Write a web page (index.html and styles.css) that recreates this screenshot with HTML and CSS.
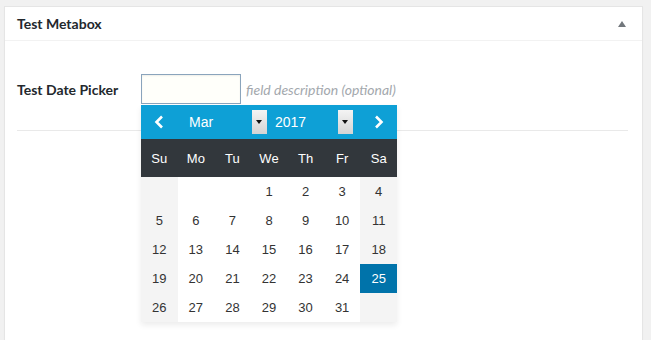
FILE: index.html
```html
<!DOCTYPE html>
<html lang="en">
<head>
  <meta charset="UTF-8">
  <title>Test Metabox</title>
  <link rel="stylesheet" href="styles.css">
</head>
<body>
  <div class="postbox">
    <div class="postbox-header">
      <h2>Test Metabox</h2>
      <span class="toggle-indicator"></span>
    </div>
    <div class="inside">
      <div class="field-row">
        <label class="field-label" for="test_date">Test Date Picker</label>
        <div class="field-body">
          <div class="picker-wrap">
            <input id="test_date" class="date-input" type="text">
            <div class="datepicker">
              <div class="dp-header">
                <span class="dp-nav">
                  <svg width="10" height="14" viewBox="0 0 10 14"><path d="M8 1.5 2.5 7 8 12.5" fill="none" stroke="#fff" stroke-width="2.6"/></svg>
                </span>
                <span class="dp-select month"><span class="dp-value">Mar</span><span class="dp-drop"></span></span>
                <span class="dp-select year"><span class="dp-value">2017</span><span class="dp-drop"></span></span>
                <span class="dp-nav next">
                  <svg width="10" height="14" viewBox="0 0 10 14"><path d="M2 1.5 7.5 7 2 12.5" fill="none" stroke="#fff" stroke-width="2.6"/></svg>
                </span>
              </div>
              <div class="dp-weekdays">
                <span>Su</span><span>Mo</span><span>Tu</span><span>We</span><span>Th</span><span>Fr</span><span>Sa</span>
              </div>
              <div class="dp-days">
                <span class="weekend"></span><span></span><span></span><span>1</span><span>2</span><span>3</span><span class="weekend">4</span>
                <span class="weekend">5</span><span>6</span><span>7</span><span>8</span><span>9</span><span>10</span><span class="weekend">11</span>
                <span class="weekend">12</span><span>13</span><span>14</span><span>15</span><span>16</span><span>17</span><span class="weekend">18</span>
                <span class="weekend">19</span><span>20</span><span>21</span><span>22</span><span>23</span><span>24</span><span class="weekend active">25</span>
                <span class="weekend">26</span><span>27</span><span>28</span><span>29</span><span>30</span><span>31</span><span class="weekend"></span>
              </div>
            </div>
          </div>
          <span class="description">field description (optional)</span>
        </div>
      </div>
    </div>
  </div>
</body>
</html>
```

FILE: styles.css
```css
body {
  margin: 0;
  background: #f1f1f1;
  font-family: Lato, "Liberation Sans", sans-serif;
  color: #23282d;
  overflow: hidden;
  height: 340px;
}
.postbox {
  margin: 6px 0 0 4px;
  width: 637px;
  min-height: 400px;
  background: #fff;
  border: 1px solid #e5e5e5;
  box-shadow: 0 1px 1px rgba(0, 0, 0, 0.04);
}
.postbox-header {
  display: flex;
  align-items: center;
  justify-content: space-between;
  height: 33px;
  padding: 0 12px;
  border-bottom: 1px solid #f2f2f2;
}
.postbox-header h2 {
  margin: 0;
  font-size: 14px;
  font-weight: 700;
  color: #23282d;
}
.toggle-indicator {
  width: 0;
  height: 0;
  margin-right: 4px;
  border-left: 4px solid transparent;
  border-right: 4px solid transparent;
  border-bottom: 6px solid #72777c;
}
.inside {
  padding: 33px 14px 0 12px;
}
.field-row {
  display: flex;
  align-items: center;
  padding-bottom: 26px;
  border-bottom: 1px solid #e9e9e9;
}
.field-label {
  width: 124px;
  font-size: 14px;
  font-weight: 700;
  color: #23282d;
}
.field-body {
  display: flex;
  align-items: center;
}
.picker-wrap {
  position: relative;
}
.date-input {
  display: block;
  box-sizing: border-box;
  width: 100px;
  height: 30px;
  margin: 0;
  border: 1px solid #8aa4bc;
  background: #fffffa;
  box-shadow: inset 0 1px 2px rgba(0, 0, 0, 0.07);
}
.description {
  margin-left: 5px;
  font-size: 14px;
  font-style: italic;
  color: #a3a8ad;
}
.datepicker {
  position: absolute;
  left: 0;
  top: 31px;
  width: 256px;
  font-family: "Liberation Sans", Arial, sans-serif;
  background: #fff;
  box-shadow: 0 3px 6px rgba(0, 0, 0, 0.08);
  z-index: 2;
}
.dp-header {
  display: flex;
  align-items: center;
  height: 34px;
  background: #0ea0d6;
  color: #fff;
}
.dp-nav {
  display: flex;
  justify-content: center;
  width: 36px;
}
.dp-nav.next {
  margin-left: 8px;
}
.dp-select {
  display: flex;
  align-items: center;
  justify-content: space-between;
  height: 24px;
  font-size: 14px;
}
.dp-select.month {
  width: 78px;
  padding-left: 12px;
}
.dp-select.year {
  width: 78px;
  margin-left: 8px;
}
.dp-drop {
  position: relative;
  width: 15px;
  height: 24px;
  background: linear-gradient(#f4f4f4, #d4d4d4);
}
.dp-drop::after {
  content: "";
  position: absolute;
  left: 4px;
  top: 10px;
  border-left: 3px solid transparent;
  border-right: 3px solid transparent;
  border-top: 4px solid #111;
}
.dp-weekdays {
  display: grid;
  grid-template-columns: repeat(7, 1fr);
  height: 38px;
  background: #32373c;
  color: #fff;
  font-size: 13px;
}
.dp-weekdays span {
  display: flex;
  align-items: center;
  justify-content: center;
}
.dp-days {
  display: grid;
  grid-template-columns: repeat(7, 1fr);
  grid-auto-rows: 29px;
  font-size: 13px;
  color: #333;
}
.dp-days span {
  display: flex;
  align-items: center;
  justify-content: center;
}
.dp-days .weekend {
  background: #f4f4f4;
}
.dp-days .active {
  background: #0073aa;
  color: #fff;
}
```
